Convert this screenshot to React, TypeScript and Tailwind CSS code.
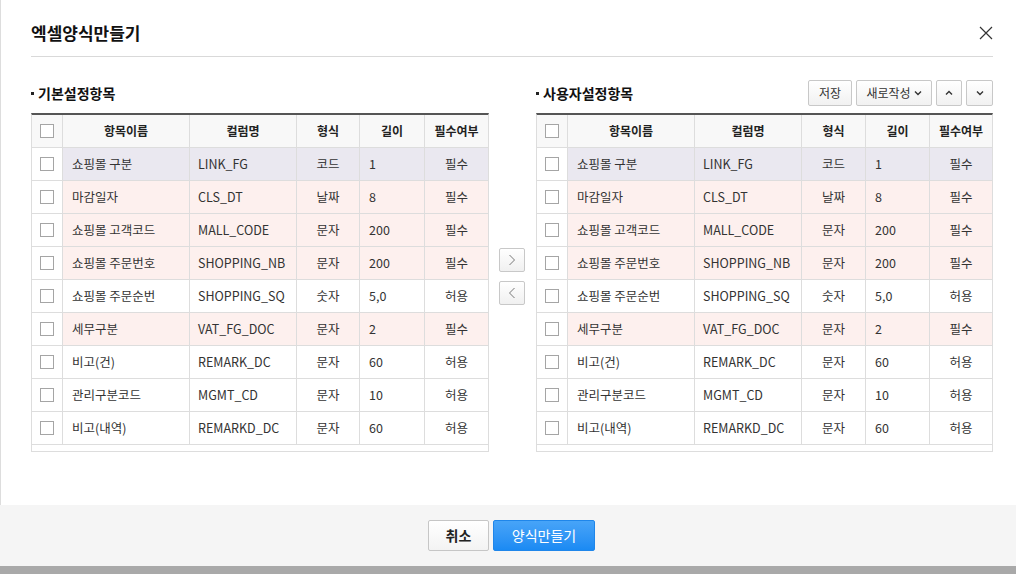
import React from "react"

type Row = {
  name: string
  col: string
  type: string
  len: string
  req: string
  tint: "lav" | "pink" | "none"
}

const rows: Row[] = [
  { name: "쇼핑몰 구분", col: "LINK_FG", type: "코드", len: "1", req: "필수", tint: "lav" },
  { name: "마감일자", col: "CLS_DT", type: "날짜", len: "8", req: "필수", tint: "pink" },
  { name: "쇼핑몰 고객코드", col: "MALL_CODE", type: "문자", len: "200", req: "필수", tint: "pink" },
  { name: "쇼핑몰 주문번호", col: "SHOPPING_NB", type: "문자", len: "200", req: "필수", tint: "pink" },
  { name: "쇼핑몰 주문순번", col: "SHOPPING_SQ", type: "숫자", len: "5,0", req: "허용", tint: "none" },
  { name: "세무구분", col: "VAT_FG_DOC", type: "문자", len: "2", req: "필수", tint: "pink" },
  { name: "비고(건)", col: "REMARK_DC", type: "문자", len: "60", req: "허용", tint: "none" },
  { name: "관리구분코드", col: "MGMT_CD", type: "문자", len: "10", req: "허용", tint: "none" },
  { name: "비고(내역)", col: "REMARKD_DC", type: "문자", len: "60", req: "허용", tint: "none" },
]

const font = { fontFamily: '"Noto Sans CJK KR", "Noto Sans", sans-serif' }

function Box() {
  return <span className="block w-[14px] h-[14px] border border-[#a5a5a5] bg-white" />
}

function tintClass(t: Row["tint"]) {
  if (t === "lav") return "bg-[#eae8f0]"
  if (t === "pink") return "bg-[#fdf0ee]"
  return "bg-white"
}

function Grid({ right }: { right?: boolean }) {
  const cols = right
    ? "grid-cols-[31px_127px_107px_64px_64px_1fr]"
    : "grid-cols-[31px_127px_107px_63px_65px_1fr]"
  return (
    <div className={`${right ? "w-[457px]" : "w-[458px]"} border-t-2 border-t-[#555] border-x border-x-[#ddd] border-b border-b-[#ddd]`}>
      <div className={`grid ${cols} h-[33px] bg-[#f8f8f8] text-[12px] font-bold text-[#222] border-b border-[#ddd]`}>
        <div className="flex items-center justify-center border-r border-[#ddd]"><Box /></div>
        <div className="flex items-center justify-center border-r border-[#ddd]">항목이름</div>
        <div className="flex items-center justify-center border-r border-[#ddd]">컬럼명</div>
        <div className="flex items-center justify-center border-r border-[#ddd]">형식</div>
        <div className="flex items-center justify-center border-r border-[#ddd]">길이</div>
        <div className="flex items-center justify-center">필수여부</div>
      </div>
      {rows.map((r, i) => (
        <div key={i} className={`grid ${cols} h-[33px] text-[12.5px] text-[#333] border-b border-[#ddd]`}>
          <div className="flex items-center justify-center border-r border-[#ddd] bg-white"><Box /></div>
          <div className={`flex items-center pl-[9px] border-r border-[#ddd] ${tintClass(r.tint)}`}>{r.name}</div>
          <div className={`flex items-center pl-[8px] border-r border-[#ddd] ${tintClass(r.tint)}`}>{r.col}</div>
          <div className={`flex items-center justify-center border-r border-[#ddd] ${tintClass(r.tint)}`}>{r.type}</div>
          <div className={`flex items-center pl-[9px] border-r border-[#ddd] ${tintClass(r.tint)}`}>{r.len}</div>
          <div className={`flex items-center justify-center ${tintClass(r.tint)}`}>{r.req}</div>
        </div>
      ))}
      <div className="h-[6px] bg-white" />
    </div>
  )
}

const btn =
  "h-[26px] flex items-center justify-center border border-[#c8c8c8] rounded-[2px] bg-gradient-to-b from-white to-[#f1f1f1] text-[12px] text-[#333]"

function Heading({ children }: { children: React.ReactNode }) {
  return (
    <span className="flex items-center text-[14px] font-bold text-[#111]">
      <span className="w-[3px] h-[3px] bg-[#222] mr-[4px] mt-[1px]" />
      {children}
    </span>
  )
}

export default function App() {
  return (
    <div className="w-[1016px] h-[574px] flex flex-col bg-white" style={font}>
      <div className="flex-1 border-l border-[#ddd] pl-[30px] pr-[23px] pt-[20px]">
        <div className="flex items-center justify-between h-[26px]">
          <h1 className="text-[17px] font-bold text-[#111] leading-[26px]">엑셀양식만들기</h1>
          <svg width="14" height="14" viewBox="0 0 14 14">
            <path d="M1 1L13 13M13 1L1 13" stroke="#333" strokeWidth="1.2" />
          </svg>
        </div>
        <div className="mt-[10px] border-b border-[#d9d9d9]" />

        <div className="flex mt-[23px]">
          <div className="flex flex-col">
            <div className="h-[26px] flex items-center"><Heading>기본설정항목</Heading></div>
            <div className="mt-[7px]"><Grid /></div>
          </div>

          <div className="w-[47px] flex flex-col items-center justify-center gap-[9px] pt-[20px] pr-[1px]">
            <button className="w-[26px] h-[24px] flex items-center justify-center border border-[#c8c8c8] rounded-[2px] bg-gradient-to-b from-white to-[#f0f0f0]">
              <svg width="8" height="12" viewBox="0 0 8 12"><path d="M1.5 1L6.5 6L1.5 11" fill="none" stroke="#777" strokeWidth="1" /></svg>
            </button>
            <button className="w-[26px] h-[24px] flex items-center justify-center border border-[#c8c8c8] rounded-[2px] bg-gradient-to-b from-white to-[#f0f0f0]">
              <svg width="8" height="12" viewBox="0 0 8 12"><path d="M6.5 1L1.5 6L6.5 11" fill="none" stroke="#777" strokeWidth="1" /></svg>
            </button>
          </div>

          <div className="flex flex-col">
            <div className="h-[26px] flex items-center justify-between">
              <Heading>사용자설정항목</Heading>
              <div className="flex items-center gap-[4px]">
                <button className={`${btn} w-[44px]`}>저장</button>
                <button className={`${btn} w-[76px] gap-[3px]`}>
                  새로작성
                  <svg width="8" height="6" viewBox="0 0 8 6"><path d="M1 1.5L4 4.5L7 1.5" fill="none" stroke="#333" strokeWidth="1.4" /></svg>
                </button>
                <button className={`${btn} w-[26px]`}>
                  <svg width="8" height="6" viewBox="0 0 8 6"><path d="M1 4.5L4 1.5L7 4.5" fill="none" stroke="#333" strokeWidth="1.4" /></svg>
                </button>
                <button className={`${btn} w-[27px]`}>
                  <svg width="8" height="6" viewBox="0 0 8 6"><path d="M1 1.5L4 4.5L7 1.5" fill="none" stroke="#333" strokeWidth="1.4" /></svg>
                </button>
              </div>
            </div>
            <div className="mt-[7px]"><Grid right /></div>
          </div>
        </div>
      </div>

      <div className="h-[61px] bg-[#f5f5f5] flex items-center justify-center gap-[4px] pl-[7px]">
        <button className="w-[61px] h-[31px] border border-[#c6c6c6] rounded-[2px] bg-gradient-to-b from-white to-[#f3f3f3] text-[14px] font-bold text-[#222]">취소</button>
        <button className="w-[102px] h-[31px] border border-[#1f86ea] rounded-[2px] bg-gradient-to-b from-[#47a4f8] to-[#1a8af3] text-[14px] text-white">양식만들기</button>
      </div>
      <div className="h-[8px] bg-[#a9a9a9]" />
    </div>
  )
}
